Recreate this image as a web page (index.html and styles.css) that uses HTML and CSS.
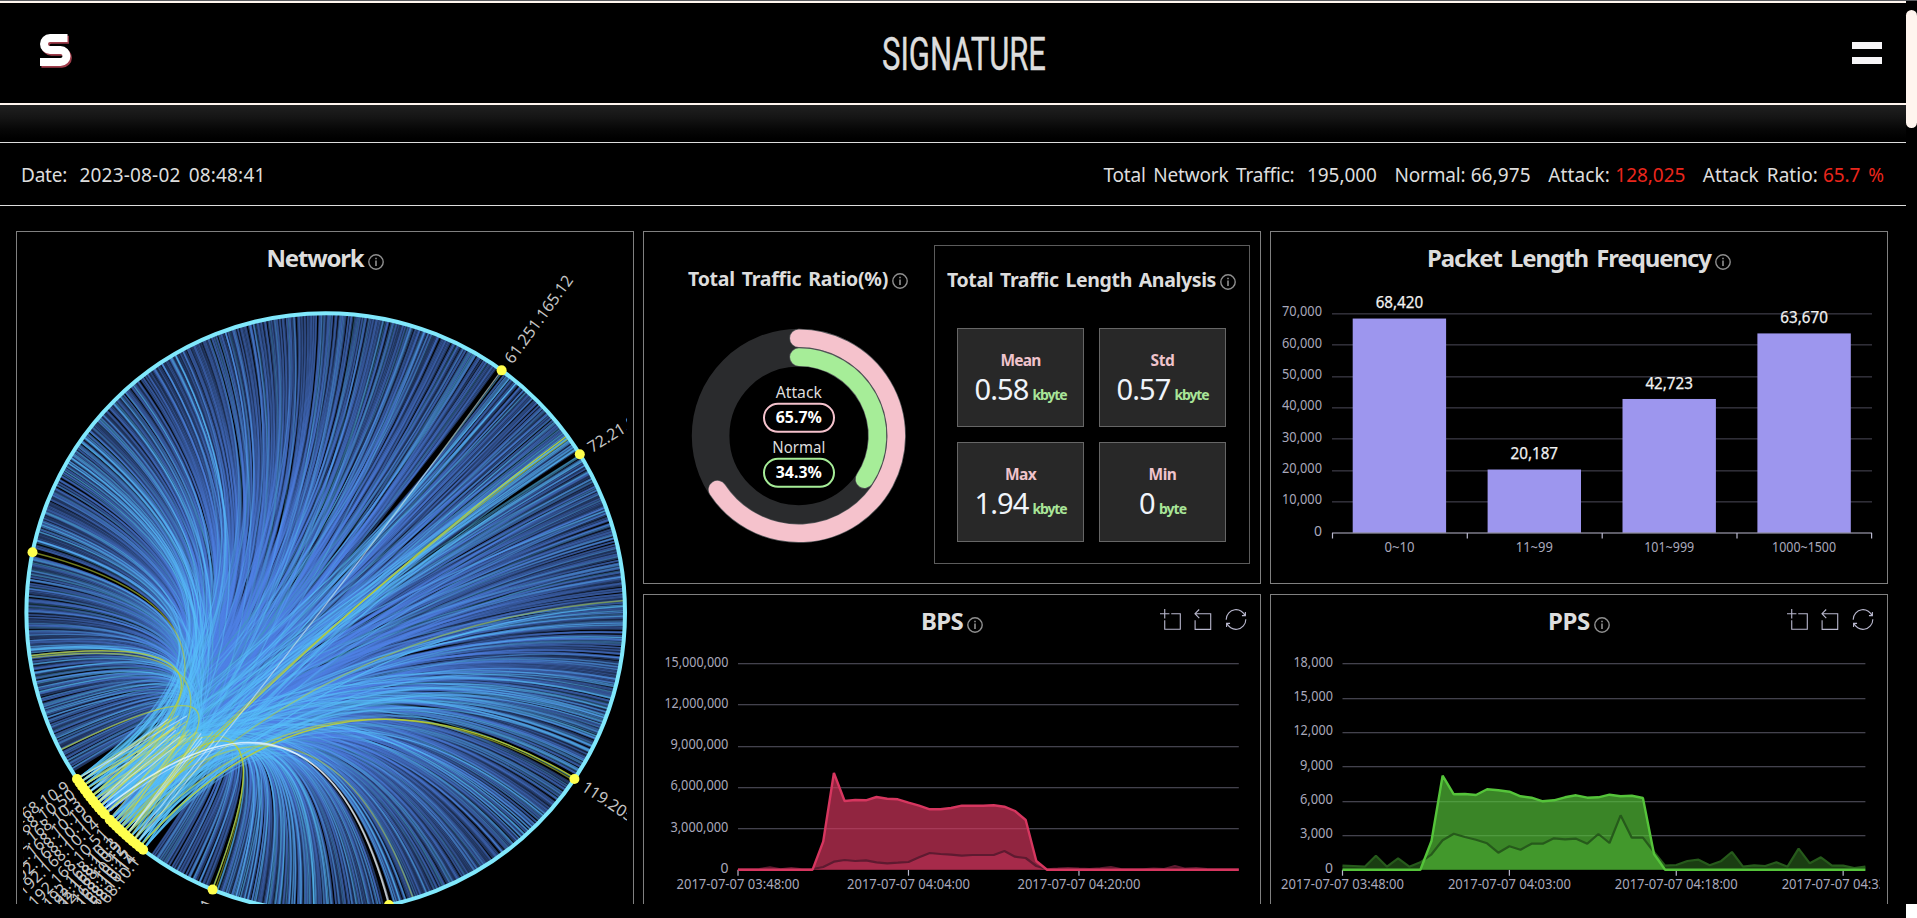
FILE: index.html
```html
<!DOCTYPE html>
<html lang="en">
<head>
<meta charset="utf-8">
<title>SIGNATURE</title>
<link rel="stylesheet" href="styles.css">
</head>
<body>
<svg class="defs" width="0" height="0">
  <symbol id="info" viewBox="0 0 16 16"><circle cx="8" cy="8" r="7.2" fill="none" stroke="currentColor" stroke-width="1.4"/><path d="M8 6.6V12M8 3.7V5.3" stroke="currentColor" stroke-width="1.6" fill="none"/></symbol>
  <symbol id="tools" viewBox="0 0 90 22">
    <g fill="none" stroke="#b9b8ce" stroke-width="1.1">
      <path vector-effect="non-scaling-stroke" transform="translate(1 1) scale(.35)" d="M0,13.5h26.9 M13.5,26.9V0 M32.1,13.5H58V58H13.5 V32.1"/>
      <path vector-effect="non-scaling-stroke" transform="translate(32.5 1) scale(.35)" d="M22,1.4L9.9,13.5l12.3,12.3 M10.3,13.5H54.9v44.6 H10.3v-26"/>
      <path vector-effect="non-scaling-stroke" transform="translate(66.5 1) scale(.35)" d="M47,18.9h9.8V8.7 M56.3,20.1 C52.1,9,40.5,0.6,26.8,2.1C12.6,3.7,1.6,16.2,2.1,30.6 M13,41.1H3.1v10.2 M3.7,39.9c4.2,11.1,15.8,19.5,29.5,18 c14.2-1.6,25.2-14.1,24.7-28.5"/>
    </g>
  </symbol>
</svg>
<div class="window">
  <div class="view">
    <div class="page">
      <header class="header">
        <svg class="logo" viewBox="38 32 36 38" width="36" height="38" fill="none" stroke-width="8">
          <path transform="translate(1.4 1.7)" stroke="#a03d4b" d="M67.5 38H50a6 6 0 0 0 0 12H60.5a6 6 0 0 1 0 12H40"/>
          <path stroke="#fff" d="M67.5 38H50a6 6 0 0 0 0 12H60.5a6 6 0 0 1 0 12H40"/>
        </svg>
        <svg class="brand" width="180" height="60" viewBox="0 0 180 60"><text x="8" y="46" textLength="164" lengthAdjust="spacingAndGlyphs">SIGNATURE</text></svg>
        <div class="menu"><i></i><i></i></div>
      </header>
      <div class="shade"></div>
      <div class="stats">
        <div class="stat"><span data-w="46">Date:</span><span class="g13" data-w="186">2023-08-02 08:48:41</span></div>
        <div class="stat">
          <span data-w="191">Total Network Traffic:</span><span class="g13" data-w="70">195,000</span>
          <span class="g18" data-w="71">Normal:</span><span class="g5" data-w="60">66,975</span>
          <span class="g18" data-w="62">Attack:</span><span class="g5 red" data-w="70">128,025</span>
          <span class="g18" data-w="115">Attack Ratio:</span><span class="g5 red" data-w="61">65.7 %</span>
        </div>
      </div>
      <main class="grid">
        <section class="panel tall">
          <h2 class="title"><span data-w="97">Network</span><svg class="info"><use href="#info"/></svg></h2>
          <svg class="chart" id="network" viewBox="23 266 604 638" width="604" height="638"></svg>
        </section>
        <section class="panel split">
          <div class="ratio">
            <h3 class="subtitle"><span data-w="200">Total Traffic Ratio(%)</span><svg class="info"><use href="#info"/></svg></h3>
            <svg class="donut" id="donut" viewBox="688 320 222 232" width="222" height="232"></svg>
          </div>
          <div class="analysis">
            <h3 class="subtitle"><span data-w="269">Total Traffic Length Analysis</span><svg class="info"><use href="#info"/></svg></h3>
            <div class="boxes">
              <div class="box"><b data-w="40">Mean</b><p><span data-w="54">0.58</span><em data-w="34">kbyte</em></p></div>
              <div class="box"><b data-w="24">Std</b><p><span data-w="54">0.57</span><em data-w="34">kbyte</em></p></div>
              <div class="box"><b data-w="31">Max</b><p><span data-w="54">1.94</span><em data-w="34">kbyte</em></p></div>
              <div class="box"><b data-w="28">Min</b><p><span data-w="16">0</span><em data-w="27">byte</em></p></div>
            </div>
          </div>
        </section>
        <section class="panel">
          <h2 class="title"><span data-w="284">Packet Length Frequency</span><svg class="info"><use href="#info"/></svg></h2>
          <svg class="chart" id="packets" viewBox="1271 286 609 280" width="609" height="280"></svg>
        </section>
        <section class="panel">
          <h2 class="title"><span data-w="42">BPS</span><svg class="info"><use href="#info"/></svg><svg class="tools"><use href="#tools"/></svg></h2>
          <svg class="chart" id="bps" viewBox="644 649 609 255" width="609" height="255"></svg>
        </section>
        <section class="panel">
          <h2 class="title"><span data-w="42">PPS</span><svg class="info"><use href="#info"/></svg><svg class="tools"><use href="#tools"/></svg></h2>
          <svg class="chart" id="pps" viewBox="1271 649 609 255" width="609" height="255"></svg>
        </section>
      </main>
    </div>
    <div class="scroll"><div class="thumb"></div></div>
  </div>
  <div class="hscroll"><div class="corner"></div></div>
</div>
<script src="charts.js"></script>
</body>
</html>
```
FILE: styles.css
```css
* { box-sizing: border-box; margin: 0; padding: 0; }
html, body { background: #000; overflow: hidden; }
body { font-family: "Noto Sans", "Open Sans", sans-serif; color: #ddd; }
.defs { position: absolute; }
.window { width: 1917px; height: 918px; display: flex; flex-direction: column; border-top: 1px solid #5a5c60; overflow: hidden; }
.view { display: flex; height: 903px; overflow: hidden; }
.page { width: 1906px; height: 903px; overflow: hidden; }
.scroll { width: 11px; padding-top: 9px; }
.thumb { height: 118px; border-radius: 6px; background: #fff5ee; }
.hscroll { height: 14px; display: flex; justify-content: flex-end; background: #000; }
.corner { width: 11px; height: 14px; background: #fff; }

.header { height: 104px; border-top: 2px solid #fff5ee; border-bottom: 2px solid #fff5ee; display: flex; justify-content: space-between; align-items: flex-start; padding: 0 24px 0 38px; }
.logo { display: block; margin-top: 29px; }
.brand { display: block; margin-top: 21px; margin-left: 2px; font: 400 46.5px Roboto, sans-serif; fill: #ddd; stroke: #ddd; stroke-width: .4px; overflow: visible; }
.menu { width: 30px; margin-top: 39px; display: flex; flex-direction: column; gap: 8px; }
.menu i { height: 7px; background: #f6f5f7; }
.shade { height: 37px; background: linear-gradient(#202020, #141414 35%, #070707 65%, #000 90%); }
.stats { height: 64px; border-top: 1px solid #ddd; border-bottom: 1px solid #ddd; display: flex; justify-content: space-between; align-items: center; padding: 1px 22px 0 21px; font-size: 19px; word-spacing: 3px; }
.stat { display: flex; }
.stat span, .title span, .subtitle span, .box b, .box span, .box em { white-space: pre; display: block; flex: none; }
.g13 { margin-left: 12.5px; }
.g18 { margin-left: 17.5px; }
.g5 { margin-left: 5.2px; }
.red { color: #ea261c; }

.grid { display: grid; grid-template-columns: repeat(3, 618px); grid-template-rows: 353px 353px; gap: 10px 9px; padding: 25px 0 0 16px; }
.panel { border: 1px solid #808080; overflow: hidden; display: flex; flex-direction: column; }
.tall { grid-row: span 2; }
.title { height: 54px; padding-top: 9px; font-size: 24px; line-height: 34px; font-weight: 700; display: flex; flex: none; justify-content: center; position: relative; word-spacing: 3px; }
.info { width: 16px; height: 16px; color: #8f8f8f; margin: 13px 0 0 4px; flex: none; }
.tools { position: absolute; left: 515px; top: 13px; width: 90px; height: 22px; }
.chart { display: block; flex: none; }
.tall .chart { margin: -20px 0 0 6px; }

.split { flex-direction: row; }
.ratio { width: 290px; padding-left: 44px; }
.subtitle { display: flex; font-size: 19.5px; line-height: 28px; font-weight: 700; word-spacing: 2px; }
.subtitle .info { margin: 8px 0 0 4px; }
.ratio .subtitle { margin-top: 33px; }
.donut { display: block; margin-top: 27px; }
.analysis { width: 316px; height: 319px; margin-top: 13px; border: 1px solid #5c5c5c; padding: 20px 12px; }
.boxes { display: grid; grid-template-columns: 127px 127px; grid-template-rows: 99px 100px; gap: 15px; margin: 34px 0 0 10px; }
.box { background: #282828; border: 1px solid #666; display: flex; flex-direction: column; align-items: center; padding-top: 21px; }
.box b { font-size: 15.5px; line-height: 20px; color: #efc3cc; }
.box p { display: flex; align-items: baseline; gap: 4px; }
.box span { font-size: 29px; line-height: 38px; color: #f0f4fa; font-weight: 400; }
.box em { font-style: normal; font-size: 14px; font-weight: 700; color: #a9e598; }

.axis { font-size: 14px; fill: #a9a8bb; }
.value { font-size: 16px; fill: #f2f2f2; stroke: #f2f2f2; stroke-width: .25px; }
.ip { font-size: 16px; fill: #c4c4c4; }
.ring-label { font-size: 16px; fill: #ddd; }
.ring-value { font-size: 16px; font-weight: 700; fill: #fff; }
```
FILE: charts.js
```js
const NS = 'http://www.w3.org/2000/svg';
const byId = id => document.getElementById(id);

function add(parent, tag, attrs, text) {
  const el = document.createElementNS(NS, tag);
  for (const k in attrs) el.setAttribute(k, attrs[k]);
  if (text !== undefined) el.textContent = text;
  parent.appendChild(el);
  return el;
}

function label(svg, cls, x, y, w, text, anchor) {
  add(svg, 'text', { class: cls, x, y, textLength: w, lengthAdjust: 'spacingAndGlyphs', 'text-anchor': anchor || 'middle' }, text);
}

// Spread letters so that each caption takes its designed width.
document.querySelectorAll('[data-w]').forEach(el => {
  el.style.letterSpacing = '0px';
  const own = el.getBoundingClientRect().width;
  const n = el.textContent.length;
  el.style.letterSpacing = ((+el.dataset.w - own) / n).toFixed(3) + 'px';
});

// ---------- network ----------
(function () {
  const svg = byId('network');
  const cx = 325.7, cy = 612.5, R = 299.3, K = 0.9;
  let seed = 20170707;
  const rnd = () => { seed = (seed * 1664525 + 1013904223) >>> 0; return seed / 4294967296; };
  const pt = a => [cx + R * Math.cos(a * Math.PI / 180), cy + R * Math.sin(a * Math.PI / 180)];
  const hubs = [];
  for (let i = 0; i < 22; i++) hubs.push(146.2 - i * 0.86 - (i > 10 ? 0.55 : 0));
  const lone = [-54, -31.9, 191.6, 33.8, 112.2, 77.8];
  const near = a => lone.some(l => Math.abs(((a - l + 540) % 360) - 180) < 0.8);
  function link(a, h, color, opacity, width) {
    const [x1, y1] = pt(a), [x2, y2] = pt(h);
    const qx = cx * K + (x1 + x2) / 2 * (1 - K), qy = cy * K + (y1 + y2) / 2 * (1 - K);
    add(svg, 'path', { d: `M${x1.toFixed(1)} ${y1.toFixed(1)}Q${qx.toFixed(1)} ${qy.toFixed(1)} ${x2.toFixed(1)} ${y2.toFixed(1)}`, fill: 'none', stroke: color, 'stroke-opacity': opacity, 'stroke-width': width });
  }
  const hub = () => hubs[Math.floor(rnd() * hubs.length)];
  // Neighbouring sources mostly report to the same few hubs.
  const mid = () => hubs[6 + Math.floor(rnd() * 9)];
  const free = () => { let a; do { a = 148 + rnd() * 338; } while (near(a)); return a; };

  for (let i = 0; i < 90; i++) link(free(), hub(), '#58bffb', 0.5, 1.3);
  const N = 1300;
  for (let i = 0; i < N; i++) {
    const a = 148 + (i + (rnd() - 0.5) * 1.6) / N * 338;
    if (!near(a)) link(a, mid(), '#5182e6', 0.4, 1.9);
  }
  for (let i = 0; i < 90; i++) link(free(), hub(), '#3fa3b5', 0.28, 1.3);
  for (let i = 0; i < 120; i++) link(free(), hub(), '#58bffb', 0.3, 1.3);
  const bundles = [[212.5, 4, 16], [239.5, 1, 4], [225, 6, 7], [327, 3.5, 18], [308, 2, 7], [22, 8, 20], [2, 4, 7], [90, 16, 26], [165, 9, 14], [45, 5, 6], [112, 7, 10], [195, 5, 8]];
  bundles.forEach(([c, s, n]) => {
    for (let i = 0; i < n; i++) {
      const a = c + (rnd() - 0.5) * 2 * s;
      if (!near(a)) link(a, hub(), '#58bffb', 0.5, 1.3);
    }
  });
  [-53.7, -31.8, -31.7, -31.5, 33.8, 112.3].forEach(a => link(a, hub(), '#58bffb', 0.5, 1.3));
  // suspicious flows
  [[191.6, 8, .6], [171.7, 5, .8], [171.3, 13, .6], [152.6, 15, .7], [-2.3, 16, .5], [33.6, 20, .9], [34.1, 18, .6], [112.2, 10, .8], [111.7, 6, .5],
   [73, 12, .5], [-36.2, 15, .9], [-35.6, 14, .6]].forEach(([a, h, o]) => link(a, hubs[h], '#b9cf35', o, 1.4));
  for (let i = 0; i < 30; i++) {
    const h = hubs[Math.floor(rnd() * 22)], [x, y] = pt(h);
    add(svg, 'path', { d: `M${x.toFixed(1)} ${y.toFixed(1)}L${(x * .25 + 148 + rnd() * 34).toFixed(1)} ${(y * .3 + 484 + rnd() * 16 - 4).toFixed(1)}`, stroke: i % 3 ? '#d3df4a' : '#e8f4ff', 'stroke-opacity': 0.55, 'stroke-width': 1.2 });
  }
  link(77.8, hubs[9], '#eef8ff', 0.8, 1.6);
  link(77.6, hubs[10], '#eef8ff', 0.5, 1.2);
  link(-54, hubs[19], '#d8ecec', 0.6, 1.3);
  add(svg, 'circle', { cx, cy, r: R, fill: 'none', stroke: '#80e8fc', 'stroke-width': 4 });
  hubs.concat(lone).forEach(a => { const [x, y] = pt(a); add(svg, 'circle', { cx: x, cy: y, r: 5, fill: '#ffff4d' }); });

  const ip = (a, text) => {
    const flip = a > 90 && a < 270;
    const r = R + 11, t = a * Math.PI / 180;
    const x = cx + r * Math.cos(t), y = cy + r * Math.sin(t);
    add(svg, 'text', { class: 'ip', x, y: y + 5.5, transform: `rotate(${flip ? a - 180 : a} ${x} ${y})`, 'text-anchor': flip ? 'end' : 'start' }, text);
  };
  ip(-54, '61.251.165.12');
  ip(-31.9, '72.21.91.29');
  ip(33.8, '119.205.1.7');
  ip(112.2, '172.16.0.1');
  const tails = ['10.9', '10.8', '10.50', '10.5', '10.3', '10.25', '10.19', '10.17', '10.16', '10.15', '10.14', '10.12', '10.51', '10.255', '10.1', '10.3', '10.9', '10.12', '10.15', '10.17', '10.14', '10.1'];
  hubs.forEach((a, i) => { if (i % 2 === 0 || i > 14) ip(a, '192.168.' + tails[i]); });
})();

// ---------- traffic ratio ----------
(function () {
  const svg = byId('donut'), cx = 798.8, cy = 435.8;
  add(svg, 'circle', { cx, cy, r: 88.2, fill: 'none', stroke: '#2a2b2d', 'stroke-width': 37.6 });
  const arc = (r, share, color) => {
    const t = share * 2 * Math.PI, x = cx + r * Math.sin(t), y = cy - r * Math.cos(t);
    const d = `M${cx} ${cy - r}A${r} ${r} 0 ${share > .5 ? 1 : 0} 1 ${x} ${y}`;
    add(svg, 'path', { d, fill: 'none', stroke: '#55575a', 'stroke-width': 19, 'stroke-linecap': 'round' });
    add(svg, 'path', { d, fill: 'none', stroke: color, 'stroke-width': 17.6, 'stroke-linecap': 'round' });
  };
  arc(97.5, .657, '#f5c2cc');
  arc(78.7, .343, '#a6ed98');
  [['Attack', 46, '65.7%', 403.8, '#f5c2cc'], ['Normal', 53, '34.3%', 458.8, '#a6ed98']].forEach(([n, w, v, y, c]) => {
    label(svg, 'ring-label', cx, y - 6, w, n);
    add(svg, 'rect', { x: 764, y, width: 70, height: 28, rx: 14, fill: '#000', stroke: c, 'stroke-width': 2 });
    label(svg, 'ring-value', cx, y + 18.7, 46, v);
  });
})();

// ---------- packet lengths ----------
(function () {
  const svg = byId('packets');
  const y0 = 532.7, step = 31.3;
  const yw = { 0: 8 };
  for (let i = 0; i <= 7; i++) {
    const y = y0 - i * step;
    if (i) add(svg, 'rect', { x: 1332, y: Math.round(y - .5), width: 540, height: 1.6, fill: '#2f2e37' });
    label(svg, 'axis', 1322, y + 2.8, yw[i] || 40, i ? i + '0,000' : '0', 'end');
  }
  [[68420, '0~10', 30], [20187, '11~99', 37], [42723, '101~999', 50], [63670, '1000~1500', 64]].forEach(([v, n, w], i) => {
    const h = v / 10000 * step, c = 1399.4 + i * 134.9;
    add(svg, 'rect', { x: c - 46.7, y: y0 - h, width: 93.4, height: h, fill: '#9d96ee' });
    label(svg, 'value', c, y0 - h - 10.2, 47.5, v.toLocaleString('en-US'));
    label(svg, 'axis', c, 552, w, n);
  });
  add(svg, 'path', { d: 'M1332 533H1872M1332.5 533v5.5M1467.3 533v5.5M1602.2 533v5.5M1737 533v5.5M1871.6 533v5.5', stroke: '#b9b8ce', 'stroke-width': 1.2, fill: 'none' });
})();

// ---------- time series ----------
function series(id, o) {
  const svg = byId(id), base = 869.7, top = 663.7;
  const n = o.ticks.length - 1;
  o.ticks.forEach(([t, w], i) => {
    const y = base - (base - top) * i / n;
    if (i) add(svg, 'rect', { x: o.left, y: Math.round(y - .5), width: o.right - o.left, height: 1.3, fill: '#43424d' });
    label(svg, 'axis', o.left - 9.6, y + 3, w, t, 'end');
  });
  const dx = (o.right - o.left) / 47;
  const line = d => {
    const p = [];
    for (let i = 0; i < 48; i++) p.push((o.left + i * dx).toFixed(1) + ' ' + (580 + (d[i] === undefined ? 868 : d[i]) / 3).toFixed(1));
    return 'M' + p.join('L');
  };
  const close = `L${o.right} ${base}L${o.left} ${base}Z`;
  o.marks.forEach(([i, t]) => {
    const x = o.left + i * dx;
    add(svg, 'path', { d: `M${x} ${base}v6`, stroke: '#b9b8ce', 'stroke-width': 1.2 });
    label(svg, 'axis', x, 888.5, 123, t);
  });
  add(svg, 'path', { d: line(o.low) + close, fill: o.lowFill });
  add(svg, 'path', { d: line(o.high) + close, fill: o.color, 'fill-opacity': .68 });
  add(svg, 'path', { d: line(o.low), fill: 'none', stroke: o.lowLine, 'stroke-width': 2.2, 'stroke-linejoin': 'bevel' });
  add(svg, 'path', { d: line(o.high), fill: 'none', stroke: o.color, 'stroke-width': 2.4, 'stroke-linejoin': 'bevel' });
}
const Z = 869, zeros = k => Array(k).fill(Z);

series('bps', {
  left: 738, right: 1238.8, color: '#d6365f', lowFill: '#42121f', lowLine: '#5e1a30',
  ticks: [['0', 8], ['3,000,000', 58], ['6,000,000', 58], ['9,000,000', 58], ['12,000,000', 64], ['15,000,000', 64]],
  marks: [[0, '2017-07-07 03:48:00'], [16, '2017-07-07 04:04:00'], [32, '2017-07-07 04:20:00']],
  high: [...zeros(8), 785, 579, 663, 660, 661, 651, 656, 658, 668, 677, 688, 688, 684, 677, 677, 677, 676, 680, 693, 720, 843, ...zeros(19)],
  low: [868, 868, 867, 862, 868, 864, 868, 867, 861, 845, 840, 843, 841, 847, 850, 848, 846, 832, 819, 822, 824, 827, 825, 825, 825, 813, 830, 834, 858, 868, 866, 864, 866, 867, 865, 861, 868, 868, 868, 866, 867, 858, 866, 864, 867, 868, 868, 868]
});
series('pps', {
  left: 1342.5, right: 1865.4, color: '#55c43a', lowFill: '#1a3d12', lowLine: '#265a1b',
  ticks: [['0', 8], ['3,000', 33], ['6,000', 33], ['9,000', 33], ['12,000', 39.5], ['15,000', 39.5], ['18,000', 39.5]],
  marks: [[0, '2017-07-07 03:48:00'], [15, '2017-07-07 04:03:00'], [30, '2017-07-07 04:18:00'], [45, '2017-07-07 04:33:00']],
  high: [...zeros(8), 783, 587, 643, 642, 645, 628, 631, 635, 649, 653, 664, 661, 652, 646, 653, 652, 644, 649, 647, 654, 822, ...zeros(19)],
  low: [857, 858, 860, 827, 860, 835, 860, 847, 823, 781, 761, 771, 779, 790, 818, 799, 809, 791, 791, 775, 778, 776, 791, 762, 789, 706, 773, 773, 816, 857, 855, 843, 839, 856, 844, 816, 860, 856, 858, 847, 860, 806, 850, 832, 857, 857, 864, 860]
});
```
